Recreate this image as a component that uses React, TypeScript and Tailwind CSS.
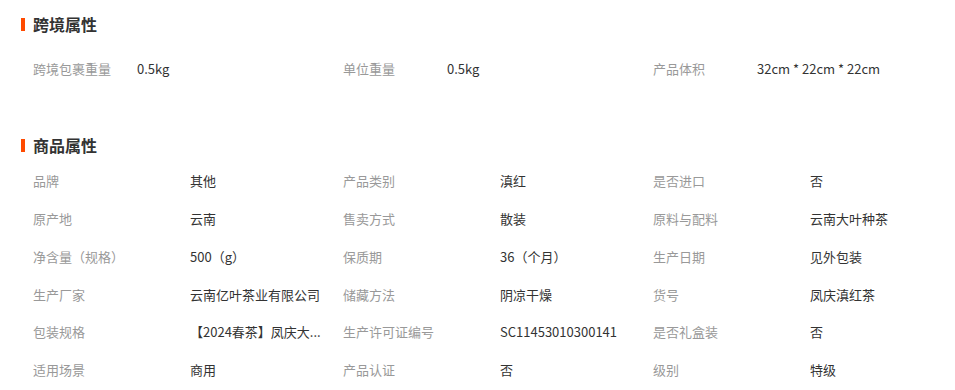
import React from "react";

const font = { fontFamily: '"Noto Sans CJK SC", "Noto Sans", sans-serif' };

type Item = [string, string];

const cross: Item[] = [
  ["跨境包裹重量", "0.5kg"],
  ["单位重量", "0.5kg"],
  ["产品体积", "32cm * 22cm * 22cm"],
];

const goods: Item[] = [
  ["品牌", "其他"],
  ["产品类别", "滇红"],
  ["是否进口", "否"],
  ["原产地", "云南"],
  ["售卖方式", "散装"],
  ["原料与配料", "云南大叶种茶"],
  ["净含量（规格）", "500（g）"],
  ["保质期", "36（个月）"],
  ["生产日期", "见外包装"],
  ["生产厂家", "云南亿叶茶业有限公司"],
  ["储藏方法", "阴凉干燥"],
  ["货号", "凤庆滇红茶"],
  ["包装规格", "【2024春茶】凤庆大..."],
  ["生产许可证编号", "SC11453010300141"],
  ["是否礼盒装", "否"],
  ["适用场景", "商用"],
  ["产品认证", "否"],
  ["级别", "特级"],
];

function Title({ text }: { text: string }) {
  return (
    <div className="flex h-[24px] items-center pl-[21px]">
      <div className="h-[13px] w-[4px] bg-[#ff4a00]" />
      <div className="ml-[8px] text-[16px] font-bold leading-[24px] text-[#333333]">{text}</div>
    </div>
  );
}

function Grid({ items }: { items: Item[] }) {
  return (
    <div className="grid grid-cols-[310px_310px_1fr] pl-[33px]">
      {items.map(([k, v], i) => (
        <div key={i} className="flex h-[37.8px] items-center text-[13px]">
          <div className="w-[157px] shrink-0 whitespace-nowrap text-[#999999]">{k}</div>
          <div className="whitespace-nowrap text-[#333333]">{v}</div>
        </div>
      ))}
    </div>
  );
}

export default function App() {
  return (
    <div className="h-[390px] w-[955px] overflow-hidden bg-white pt-[12px]" style={font}>
      <Title text="跨境属性" />
      <div className="mt-[14px]">
        <div className="grid grid-cols-[310px_310px_1fr] pl-[33px]">
          {cross.map(([k, v], i) => (
            <div key={i} className="flex h-[38px] items-center text-[13px]">
              <div className="w-[104px] shrink-0 whitespace-nowrap text-[#999999]">{k}</div>
              <div className="whitespace-nowrap text-[#333333]">{v}</div>
            </div>
          ))}
        </div>
      </div>
      <div className="mt-[45px]">
        <Title text="商品属性" />
      </div>
      <div className="mt-[5px]">
        <Grid items={goods} />
      </div>
    </div>
  );
}
